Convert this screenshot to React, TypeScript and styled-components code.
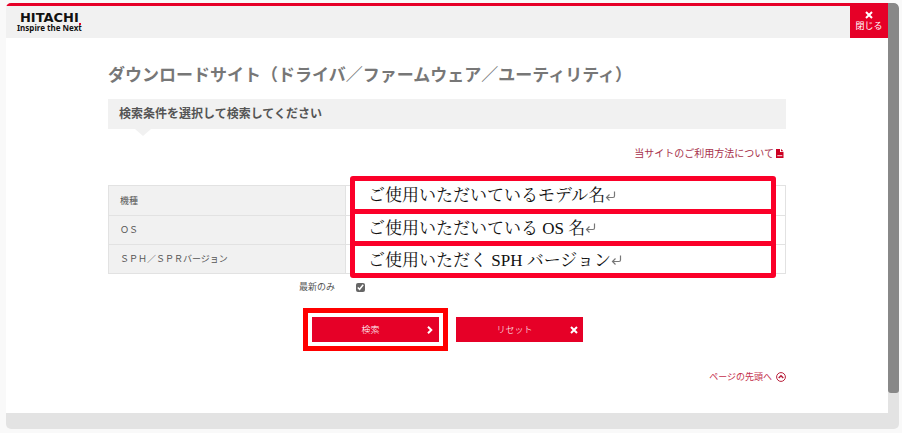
import React from "react";
import styled, { createGlobalStyle, css } from "styled-components";

const RED = "#e60027";
const GREY = "#f1f1f1";
const LINE = "#e2e2e2";

const GlobalStyle = createGlobalStyle`
  *, *::before, *::after { box-sizing: border-box; }
  body {
    margin: 0;
    background: #f9f9f9;
    color: #555;
    font-family: "Noto Sans CJK JP", sans-serif;
    font-size: 9px;
    line-height: 14px;
  }
`;

const Frame = styled.div`
  margin: 3px 3px 4px 6px;
  border-radius: 5px;
  overflow: hidden;
  background: #e3e3e3;
`;

const Viewport = styled.div`
  display: grid;
  grid-template-columns: 1fr 11px;
`;

const Page = styled.div`
  background: #fff;
`;

const Track = styled.div`
  padding-bottom: 20px;
  display: flex;
`;

const Thumb = styled.div`
  flex: 1;
  border-radius: 0 5px 3px 3px;
  background: #888;
`;

const StatusStrip = styled.div`
  height: 16px;
`;

const Header = styled.header`
  display: flex;
  justify-content: space-between;
  border-top: 3px solid ${RED};
  background: ${GREY};
  height: 35px;
`;

const Logo = styled.a`
  display: flex;
  flex-direction: column;
  align-items: center;
  padding: 5px 0 0 11px;
  color: #111;
  text-decoration: none;
`;

const LogoName = styled.span`
  font: bold 13px/13px "DejaVu Sans", sans-serif;
`;

const LogoTagline = styled.span`
  position: relative;
  font: bold 8px/8px "Noto Sans", sans-serif;

  &::after {
    content: "";
    position: absolute;
    top: -1px;
    right: 1px;
    width: 2px;
    height: 2px;
    background: ${RED};
  }
`;

const CloseButton = styled.button`
  display: flex;
  flex-direction: column;
  align-items: center;
  width: 38px;
  padding: 5px 0 0;
  border: 0;
  background: ${RED};
  color: #fff;
  font: inherit;
`;

const Main = styled.main`
  padding: 24px 102px 29px;
`;

const Title = styled.h1`
  margin: 0 0 13px;
  color: #777;
  font-size: 17px;
  line-height: 24px;
  font-weight: 700;
`;

const SubTitle = styled.h2`
  position: relative;
  margin: 0;
  padding: 4px 11px 6px;
  background: ${GREY};
  color: #555;
  font-size: 12px;
  line-height: 20px;
  font-weight: 700;

  &::after {
    content: "";
    position: absolute;
    top: 100%;
    left: 27px;
    border: solid transparent;
    border-width: 7px 8px 0;
    border-top-color: ${GREY};
  }
`;

const LinkRow = styled.div`
  display: flex;
  justify-content: flex-end;
`;

const TextLink = styled.a<{ $large?: boolean }>`
  display: flex;
  align-items: center;
  gap: ${(p) => (p.$large ? 2 : 4)}px;
  color: ${(p) => (p.$large ? "#a8324c" : "#c4304c")};
  font-size: ${(p) => (p.$large ? 10 : 9)}px;
  text-decoration: none;
`;

const GuideRow = styled(LinkRow)`
  padding: 17px 2px 25px;
`;

const TopRow = styled(LinkRow)`
  margin-top: 28px;
`;

const Criteria = styled.div`
  position: relative;
`;

const Table = styled.table`
  width: 100%;
  border-collapse: collapse;
  table-layout: fixed;

  th,
  td {
    height: 29px;
    padding: 0 11px;
    border: 1px solid ${LINE};
  }

  tr:first-child > * {
    height: 30px;
  }

  th {
    width: 35%;
    background: ${GREY};
    text-align: left;
    font-weight: 400;
  }
`;

const Callouts = styled.div`
  position: absolute;
  top: -9px;
  right: 10px;
  left: 242px;
  display: grid;
  gap: 5px;
  padding: 5px;
  border-radius: 3px;
  background: #fb0029;
`;

const Callout = styled.div`
  display: flex;
  align-items: center;
  height: 27px;
  padding: 2px 0 0 13px;
  background: #fff;
  color: #111;
  font-family: "Liberation Serif", "Noto Serif CJK JP", "Noto Sans CJK JP", serif;
  font-size: 17px;
  line-height: 24px;
  font-weight: 400;

  &:first-child {
    height: 28px;
  }
`;

const LatestRow = styled.label`
  display: grid;
  grid-template-columns: 227px 1fr;
  column-gap: 21px;
  align-items: center;
  margin-top: 6px;
  text-align: right;
`;

const Check = styled.input`
  width: 9px;
  height: 9px;
  margin: 0;
  accent-color: #666;
`;

const Actions = styled.div`
  display: flex;
  justify-content: center;
  gap: 17px;
  margin-top: 23px;
`;

const ActionButton = styled.button<{ $marked?: boolean }>`
  display: grid;
  grid-template-columns: 1fr 10px;
  align-items: center;
  width: 127px;
  height: 25px;
  padding: 0 3px 0 4px;
  border: 0;
  background: ${RED};
  color: #fff;
  font: inherit;
  font-weight: 300;

  ${(p) =>
    p.$marked &&
    css`
      outline: 5px solid #ff0000;
      outline-offset: 4px;
    `}
`;

const Cross = () => (
  <svg width="8" height="8" viewBox="0 0 8 8" stroke="#fff" strokeWidth="2" aria-hidden="true">
    <path d="M1 1l6 6M7 1L1 7" />
  </svg>
);

const Chevron = () => (
  <svg width="8" height="8" viewBox="0 0 8 8" fill="none" stroke="#fff" strokeWidth="2" aria-hidden="true">
    <path d="M2 0.7L5.3 4L2 7.3" />
  </svg>
);

const PdfIcon = () => (
  <svg width="8" height="9" viewBox="0 0 8 9" aria-hidden="true">
    <path d="M0 0h4v3h3.500v6H0zM5 0l2.500 2.200H5z" fill="#cc0022" />
    <path d="M1.300 6h5v1.200h-5z" fill="#f4b8c2" />
  </svg>
);

const UpIcon = () => (
  <svg width="10" height="10" viewBox="0 0 10 10" fill="none" stroke="#b8203c" aria-hidden="true">
    <circle cx="5" cy="5" r="4.400" strokeWidth="1" />
    <path d="M2.700 6L5 3.700L7.300 6" strokeWidth="1.500" />
  </svg>
);

const ReturnMark = () => (
  <svg width="11" height="11" viewBox="0 0 11 11" fill="none" stroke="#777" strokeWidth="1.200" aria-hidden="true">
    <path d="M9.500 0.500v4.500q0 1.500-1.500 1.500H1.500M4.500 3.500l-3 3l3 3" />
  </svg>
);

const criteria = [
  { label: "機種", note: "ご使用いただいているモデル名" },
  { label: "ＯＳ", note: "ご使用いただいている OS 名" },
  { label: "ＳＰＨ／ＳＰＲバージョン", note: "ご使用いただく SPH バージョン" },
];

export default function App() {
  return (
    <>
      <GlobalStyle />
      <Frame>
        <Viewport>
          <Page>
            <Header>
              <Logo href="#">
                <LogoName>HITACHI</LogoName>
                <LogoTagline>Inspire the Next</LogoTagline>
              </Logo>
              <CloseButton type="button">
                <Cross />
                閉じる
              </CloseButton>
            </Header>
            <Main>
              <Title>ダウンロードサイト（ドライバ／ファームウェア／ユーティリティ）</Title>
              <SubTitle>検索条件を選択して検索してください</SubTitle>
              <GuideRow>
                <TextLink href="#guide" $large>
                  当サイトのご利用方法について
                  <PdfIcon />
                </TextLink>
              </GuideRow>
              <Criteria>
                <Table>
                  <tbody>
                    {criteria.map((c) => (
                      <tr key={c.label}>
                        <th scope="row">{c.label}</th>
                        <td />
                      </tr>
                    ))}
                  </tbody>
                </Table>
                <Callouts>
                  {criteria.map((c) => (
                    <Callout key={c.label}>
                      {c.note}
                      <ReturnMark />
                    </Callout>
                  ))}
                </Callouts>
              </Criteria>
              <LatestRow>
                最新のみ
                <Check type="checkbox" defaultChecked />
              </LatestRow>
              <Actions>
                <ActionButton type="button" $marked>
                  検索
                  <Chevron />
                </ActionButton>
                <ActionButton type="button">
                  リセット
                  <Cross />
                </ActionButton>
              </Actions>
              <TopRow>
                <TextLink href="#top">
                  ページの先頭へ
                  <UpIcon />
                </TextLink>
              </TopRow>
            </Main>
          </Page>
          <Track>
            <Thumb />
          </Track>
        </Viewport>
        <StatusStrip />
      </Frame>
    </>
  );
}
